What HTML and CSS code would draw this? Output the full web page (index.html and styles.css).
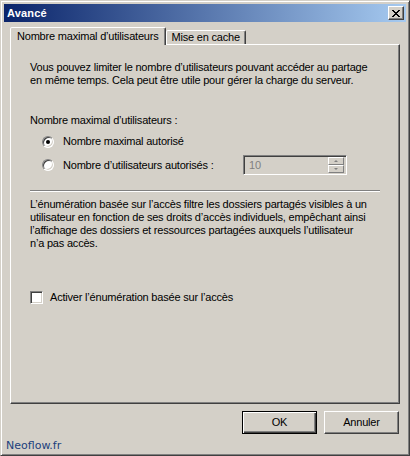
FILE: index.html
```html
<!DOCTYPE html>
<html lang="fr">
<head>
    <meta charset="UTF-8">
    <meta name="viewport" content="width=device-width, initial-scale=1.0">
    <title>Avancé</title>
    <link rel="stylesheet" href="styles.css">
</head>
<body>
    <div class="window">
        <div class="titlebar">
            <span class="title">Avancé</span>
            <button type="button" class="close-btn" aria-label="Fermer">
                <svg width="8" height="7" viewBox="0 0 8 7" shape-rendering="crispEdges">
                    <path fill="#000" d="M0 0h2v1H0zM6 0h2v1H6zM1 1h2v1H1zM5 1h2v1H5zM2 2h4v1H2zM3 3h2v1H3zM2 4h4v1H2zM1 5h2v1H1zM5 5h2v1H5zM0 6h2v1H0zM6 6h2v1H6z"/>
                </svg>
            </button>
        </div>

        <div class="content">
            <div class="tabs">
                <div class="tab active">Nombre maximal d’utilisateurs</div>
                <div class="tab">Mise en cache</div>
            </div>

            <div class="tab-panel">
                <p class="intro">Vous pouvez limiter le nombre d’utilisateurs pouvant accéder au partage<br>en même temps. Cela peut être utile pour gérer la charge du serveur.</p>

                <p class="group-label">Nombre maximal d’utilisateurs :</p>

                <div class="option">
                    <span class="radio checked"></span>
                    <span>Nombre maximal autorisé</span>
                </div>

                <div class="option">
                    <div class="option-label">
                        <span class="radio"></span>
                        <span>Nombre d’utilisateurs autorisés :</span>
                    </div>
                    <div class="spinner">
                        <span class="spinner-value">10</span>
                        <div class="spinner-buttons">
                            <span class="spin-btn"><span class="arrow-up"></span></span>
                            <span class="spin-btn"><span class="arrow-down"></span></span>
                        </div>
                    </div>
                </div>

                <div class="separator"></div>

                <p class="desc">L’énumération basée sur l’accès filtre les dossiers partagés visibles à un<br>utilisateur en fonction de ses droits d’accès individuels, empêchant ainsi<br>l’affichage des dossiers et ressources partagées auxquels l’utilisateur<br>n’a pas accès.</p>

                <div class="check-row">
                    <span class="checkbox"></span>
                    <span>Activer l’énumération basée sur l’accès</span>
                </div>
            </div>

            <div class="actions">
                <button type="button" class="btn default">OK</button>
                <button type="button" class="btn">Annuler</button>
            </div>
        </div>

        <div class="brand">Neoflow.fr</div>
    </div>
</body>
</html>
```

FILE: styles.css
```css
* {
    box-sizing: border-box;
    margin: 0;
    padding: 0;
}

body {
    font-family: 'Liberation Sans', Arial, sans-serif;
    font-size: 11px;
    letter-spacing: -0.2px;
    line-height: 13px;
    color: #000;
    background: #d4d0c8;
}

/* window frame */
.window {
    width: 410px;
    height: 456px;
    display: flex;
    flex-direction: column;
    background: #d4d0c8;
    border: 1px solid;
    border-color: #d4d0c8 #404040 #404040 #d4d0c8;
    box-shadow: inset 1px 1px #fff, inset -1px -1px #808080;
    padding: 3px;
}

.titlebar {
    height: 18px;
    display: flex;
    align-items: center;
    justify-content: space-between;
    padding: 0 2px 0 3px;
    background: linear-gradient(to right, #0a246a, #a6caf0);
}

.title {
    color: #fff;
    font-weight: bold;
    letter-spacing: 0.2px;
}

.close-btn {
    width: 16px;
    height: 14px;
    display: flex;
    align-items: center;
    justify-content: center;
    background: #d4d0c8;
    border: 1px solid;
    border-color: #fff #404040 #404040 #fff;
    box-shadow: inset -1px -1px #808080;
}

.content {
    flex: 1;
    display: flex;
    flex-direction: column;
    padding: 5px 6px 0;
}

/* tabs */
.tabs {
    display: flex;
    align-items: flex-end;
    height: 18px;
    margin-bottom: -1px;
    position: relative;
    z-index: 1;
}

.tab {
    height: 14px;
    margin-bottom: 1px;
    padding: 0 5px;
    display: flex;
    align-items: center;
    justify-content: center;
    white-space: nowrap;
    background: #d4d0c8;
    border: 1px solid;
    border-bottom: none;
    border-color: #fff #404040 transparent #fff;
    border-radius: 2px 2px 0 0;
    box-shadow: inset -1px 0 #808080;
}

.tab.active {
    height: 18px;
    margin-bottom: 0;
    padding: 0 6px;
}

.tab-panel {
    height: 360px;
    padding: 16px 19px 0;
    border: 1px solid;
    border-color: #fff #404040 #404040 #fff;
    box-shadow: inset -1px -1px #808080;
}

.group-label {
    margin-top: 27px;
}

.option {
    display: flex;
    align-items: center;
    gap: 9px;
    padding-left: 12px;
    margin-top: 8px;
}

.option + .option {
    margin-top: 7px;
}

.option-label {
    width: 192px;
    display: flex;
    align-items: center;
    gap: 9px;
}

.radio {
    width: 12px;
    height: 12px;
    flex-shrink: 0;
    border-radius: 50%;
    background: #fff;
    border: 1px solid;
    border-color: #808080 #fff #fff #808080;
    box-shadow: inset 1px 1px #404040, inset -1px -1px #d4d0c8;
    display: flex;
    align-items: center;
    justify-content: center;
}

.radio.checked::after {
    content: '';
    width: 4px;
    height: 4px;
    border-radius: 50%;
    background: #000;
}

/* disabled spin box */
.spinner {
    width: 104px;
    height: 20px;
    display: flex;
    align-items: center;
    justify-content: space-between;
    padding: 2px;
    background: #d4d0c8;
    border: 1px solid;
    border-color: #808080 #fff #fff #808080;
    box-shadow: inset 1px 1px #404040, inset -1px -1px #d4d0c8;
}

.spinner-value {
    color: #808080;
    padding-left: 3px;
}

.spinner-buttons {
    width: 16px;
    height: 16px;
    display: flex;
    flex-direction: column;
}

.spin-btn {
    flex: 1;
    display: flex;
    align-items: center;
    justify-content: center;
    border: 1px solid;
    border-color: #fff #808080 #808080 #fff;
    background: #d4d0c8;
}

.arrow-up,
.arrow-down {
    width: 0;
    height: 0;
    border-left: 2px solid transparent;
    border-right: 2px solid transparent;
}

.arrow-up {
    border-bottom: 2px solid #808080;
}

.arrow-down {
    border-top: 2px solid #808080;
}

.separator {
    margin-top: 15px;
    border-top: 1px solid #808080;
    border-bottom: 1px solid #fff;
}

.desc {
    margin-top: 6px;
}

.check-row {
    display: flex;
    align-items: center;
    gap: 7px;
    margin-top: 41px;
}

.checkbox {
    width: 13px;
    height: 13px;
    background: #fff;
    border: 1px solid;
    border-color: #808080 #fff #fff #808080;
    box-shadow: inset 1px 1px #404040, inset -1px -1px #d4d0c8;
}

/* dialog buttons */
.actions {
    display: flex;
    justify-content: flex-end;
    gap: 7px;
    margin-top: 7px;
    padding-right: 1px;
}

.btn {
    width: 75px;
    height: 23px;
    font: inherit;
    letter-spacing: inherit;
    color: #000;
    background: #d4d0c8;
    border: 1px solid;
    border-color: #fff #404040 #404040 #fff;
    box-shadow: inset -1px -1px #808080;
}

.btn.default {
    border-color: #000;
    box-shadow: inset 1px 1px #fff, inset -1px -1px #404040, inset -2px -2px #808080;
}

.brand {
    padding-left: 2px;
    font-family: 'DejaVu Sans', sans-serif;
    font-size: 11px;
    letter-spacing: 0;
    color: #21407c;
}
```
